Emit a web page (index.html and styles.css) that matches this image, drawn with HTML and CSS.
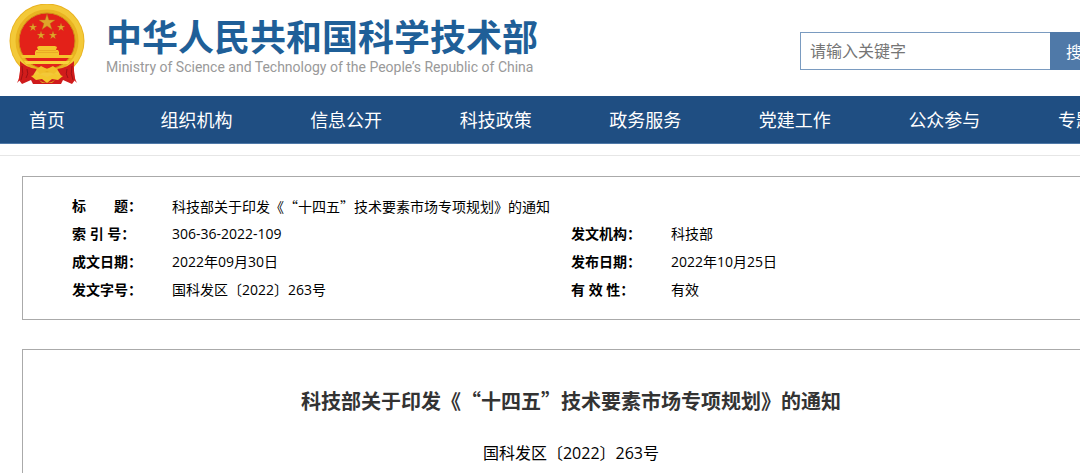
FILE: index.html
```html
<!DOCTYPE html>
<html lang="zh-CN">
<head>
    <meta charset="UTF-8">
    <meta name="viewport" content="width=device-width, initial-scale=1.0">
    <title>科技部关于印发《“十四五”技术要素市场专项规划》的通知</title>
    <link rel="stylesheet" href="styles.css">
</head>
<body>
<div class="page">

    <!-- Header -->
    <header class="header">
        <div class="brand">
            <svg class="emblem" viewBox="0 0 76 82" aria-hidden="true">
                <path d="M12 57L10 76L13 80L22 76L24 80H52L54 76L63 80L66 76L64 57Z" fill="#cf1b1c"/>
                <circle cx="38" cy="37" r="37.500" fill="#e9b321"/>
                <circle cx="38" cy="37" r="34" fill="none" stroke="#f3c938" stroke-width="5"/>
                <circle cx="38" cy="37" r="28" fill="#e32119" stroke="#d08e18" stroke-width="1"/>
                <g fill="#dfa52a" stroke="#b96c12" stroke-width=".4">
                    <path id="star" d="M38 10L39.900 15.900H46.100L41.100 19.600L43 25.500L38 21.900L33 25.500L34.900 19.600L29.900 15.900H36.100Z"/>
                    <use href="#star" transform="translate(5 14) scale(.5)"/>
                    <use href="#star" transform="translate(33 14) scale(.5)"/>
                    <use href="#star" transform="translate(13 22) scale(.5)"/>
                    <use href="#star" transform="translate(25 22) scale(.5)"/>
                </g>
                <path d="M28 43L30 42H46L48 43L47 46H49L50 48V51H64L63 54H13L12 51H26V48L27 46H29Z" fill="#f5c32c"/>
                <path d="M29 46.500H47M27 48.500H49" stroke="#e39a22" stroke-width=".6"/>
                <path d="M15 57H61L59 60H17Z" fill="#f8d33c"/>
                <path d="M11 57C15 61 20 64 28 65L23 73L19 72L15 78L11 76L8 79C12 72 11 64 11 57ZM65 57C61 61 56 64 48 65L53 73L57 72L61 78L65 76L68 79C64 72 65 64 65 57Z" fill="#d11c1b"/>
                <path d="M13 62Q15 70 12 76M18 65Q20 70 17 74M63 62Q61 70 64 76M58 65Q56 70 59 74" fill="none" stroke="#9e1015" stroke-width="1"/>
                <path d="M27 66L32 62L38 65L44 62L49 66L45 70L38 67L31 70Z" fill="#f1bf2a"/>
                <path d="M22 72L30 70L38 73L46 70L54 72L49 76L43 75L38 79L33 75L27 76Z" fill="#f3c72d"/>
                <path d="M30 76Q38 82 46 76L43 79H33Z" fill="#dfa31f"/>
            </svg>
            <div class="brand-text">
                <div class="brand-name">中华人民共和国科学技术部</div>
                <div class="brand-sub" lang="en">Ministry of Science and Technology of the People’s Republic of China</div>
            </div>
        </div>
        <form class="search">
            <input type="text" placeholder="请输入关键字" aria-label="请输入关键字">
            <button type="button">搜索</button>
        </form>
    </header>

    <!-- Navigation -->
    <nav class="nav">
        <ul>
            <li><a href="#">首页</a></li>
            <li><a href="#">组织机构</a></li>
            <li><a href="#">信息公开</a></li>
            <li><a href="#">科技政策</a></li>
            <li><a href="#">政务服务</a></li>
            <li><a href="#">党建工作</a></li>
            <li><a href="#">公众参与</a></li>
            <li><a href="#">专题专栏</a></li>
        </ul>
    </nav>

    <!-- Main Content -->
    <main class="main">
        <div class="info">
            <table>
                <colgroup>
                    <col class="col-label">
                    <col>
                    <col class="col-label">
                    <col>
                </colgroup>
                <tbody>
                    <tr>
                        <th scope="row">标&emsp;&emsp;题：</th>
                        <td class="info-title" colspan="3">科技部关于印发《“十四五”技术要素市场专项规划》的通知</td>
                    </tr>
                    <tr>
                        <th scope="row">索 引 号：</th>
                        <td>306-36-2022-109</td>
                        <th scope="row">发文机构：</th>
                        <td>科技部</td>
                    </tr>
                    <tr>
                        <th scope="row">成文日期：</th>
                        <td>2022年09月30日</td>
                        <th scope="row">发布日期：</th>
                        <td>2022年10月25日</td>
                    </tr>
                    <tr>
                        <th scope="row">发文字号：</th>
                        <td>国科发区〔2022〕263号</td>
                        <th scope="row">有 效 性：</th>
                        <td>有效</td>
                    </tr>
                </tbody>
            </table>
        </div>

        <article class="article">
            <h1>科技部关于印发《“十四五”技术要素市场专项规划》的通知</h1>
            <p>国科发区〔2022〕263号</p>
        </article>
    </main>

</div>
</body>
</html>
```
FILE: styles.css
```css
/* Global Styles */
* {
    box-sizing: border-box;
}

body {
    margin: 0;
    background-color: #fff;
    color: #000;
    font-family: "Open Sans", "Noto Sans CJK SC", sans-serif;
    font-size: 14px;
    overflow: hidden;
    text-spacing-trim: space-all;
}

.page {
    min-width: 1142px;
}

/* Header */
.header {
    display: flex;
    justify-content: space-between;
    height: 96px;
    padding-left: 9px;
}

.brand {
    display: flex;
    gap: 21px;
    padding-top: 4px;
}

.emblem {
    width: 76px;
    height: 82px;
}

.brand-text {
    padding-top: 11px;
    white-space: nowrap;
}

.brand-name {
    color: #1f5f98;
    font-family: "Noto Sans CJK SC", sans-serif;
    font-size: 36px;
    font-weight: bold;
    line-height: 40px;
}

.brand-sub {
    color: #999;
    font-family: Roboto, sans-serif;
    font-size: 14px;
    line-height: 24px;
}

/* Search */
.search {
    display: flex;
    width: 342px;
    height: 38px;
    margin-top: 32px;
}

.search input {
    width: 250px;
    padding: 0 9px;
    border: 1px solid #7a9bc0;
    border-right: none;
    font-family: inherit;
    font-size: 16px;
}

.search input::placeholder {
    color: #757575;
}

.search button {
    flex: 1;
    padding: 0 16px;
    border: none;
    background-color: #4f79a8;
    color: #fff;
    font-family: inherit;
    font-size: 16px;
    text-align: left;
}

/* Navigation */
.nav {
    padding-bottom: 11px;
    border-bottom: 1px solid #e6e6e6;
}

.nav ul {
    display: flex;
    justify-content: space-between;
    margin: 0;
    padding: 2px 12px 0 29px;
    border-bottom: 1px solid #4f79a8;
    background-color: #1f4e82;
    list-style: none;
}

.nav li:first-child {
    width: 54px;
}

.nav a {
    color: #fff;
    font-size: 18px;
    line-height: 45px;
    text-decoration: none;
}

/* Main Content */
.main {
    padding: 20px 22px 0;
}

/* Document Info */
.info {
    padding: 15px 49px;
    border: 1px solid #aaa;
}

.info table {
    width: 100%;
    border-collapse: collapse;
    table-layout: fixed;
}

.col-label {
    width: 100px;
}

.info th,
.info td {
    height: 28px;
    padding: 0;
    line-height: 28px;
    text-align: left;
}

.info .info-title,
.article h1 {
    font-family: "Noto Sans CJK SC", sans-serif;
}

/* Article */
.article {
    margin-top: 29px;
    padding: 36px 49px;
    border: 1px solid #aaa;
    text-align: center;
}

.article h1 {
    margin: 0;
    color: #333;
    font-size: 20px;
    line-height: 30px;
}

.article p {
    margin: 24px 0 0;
    font-size: 16px;
    line-height: 26px;
}
```
